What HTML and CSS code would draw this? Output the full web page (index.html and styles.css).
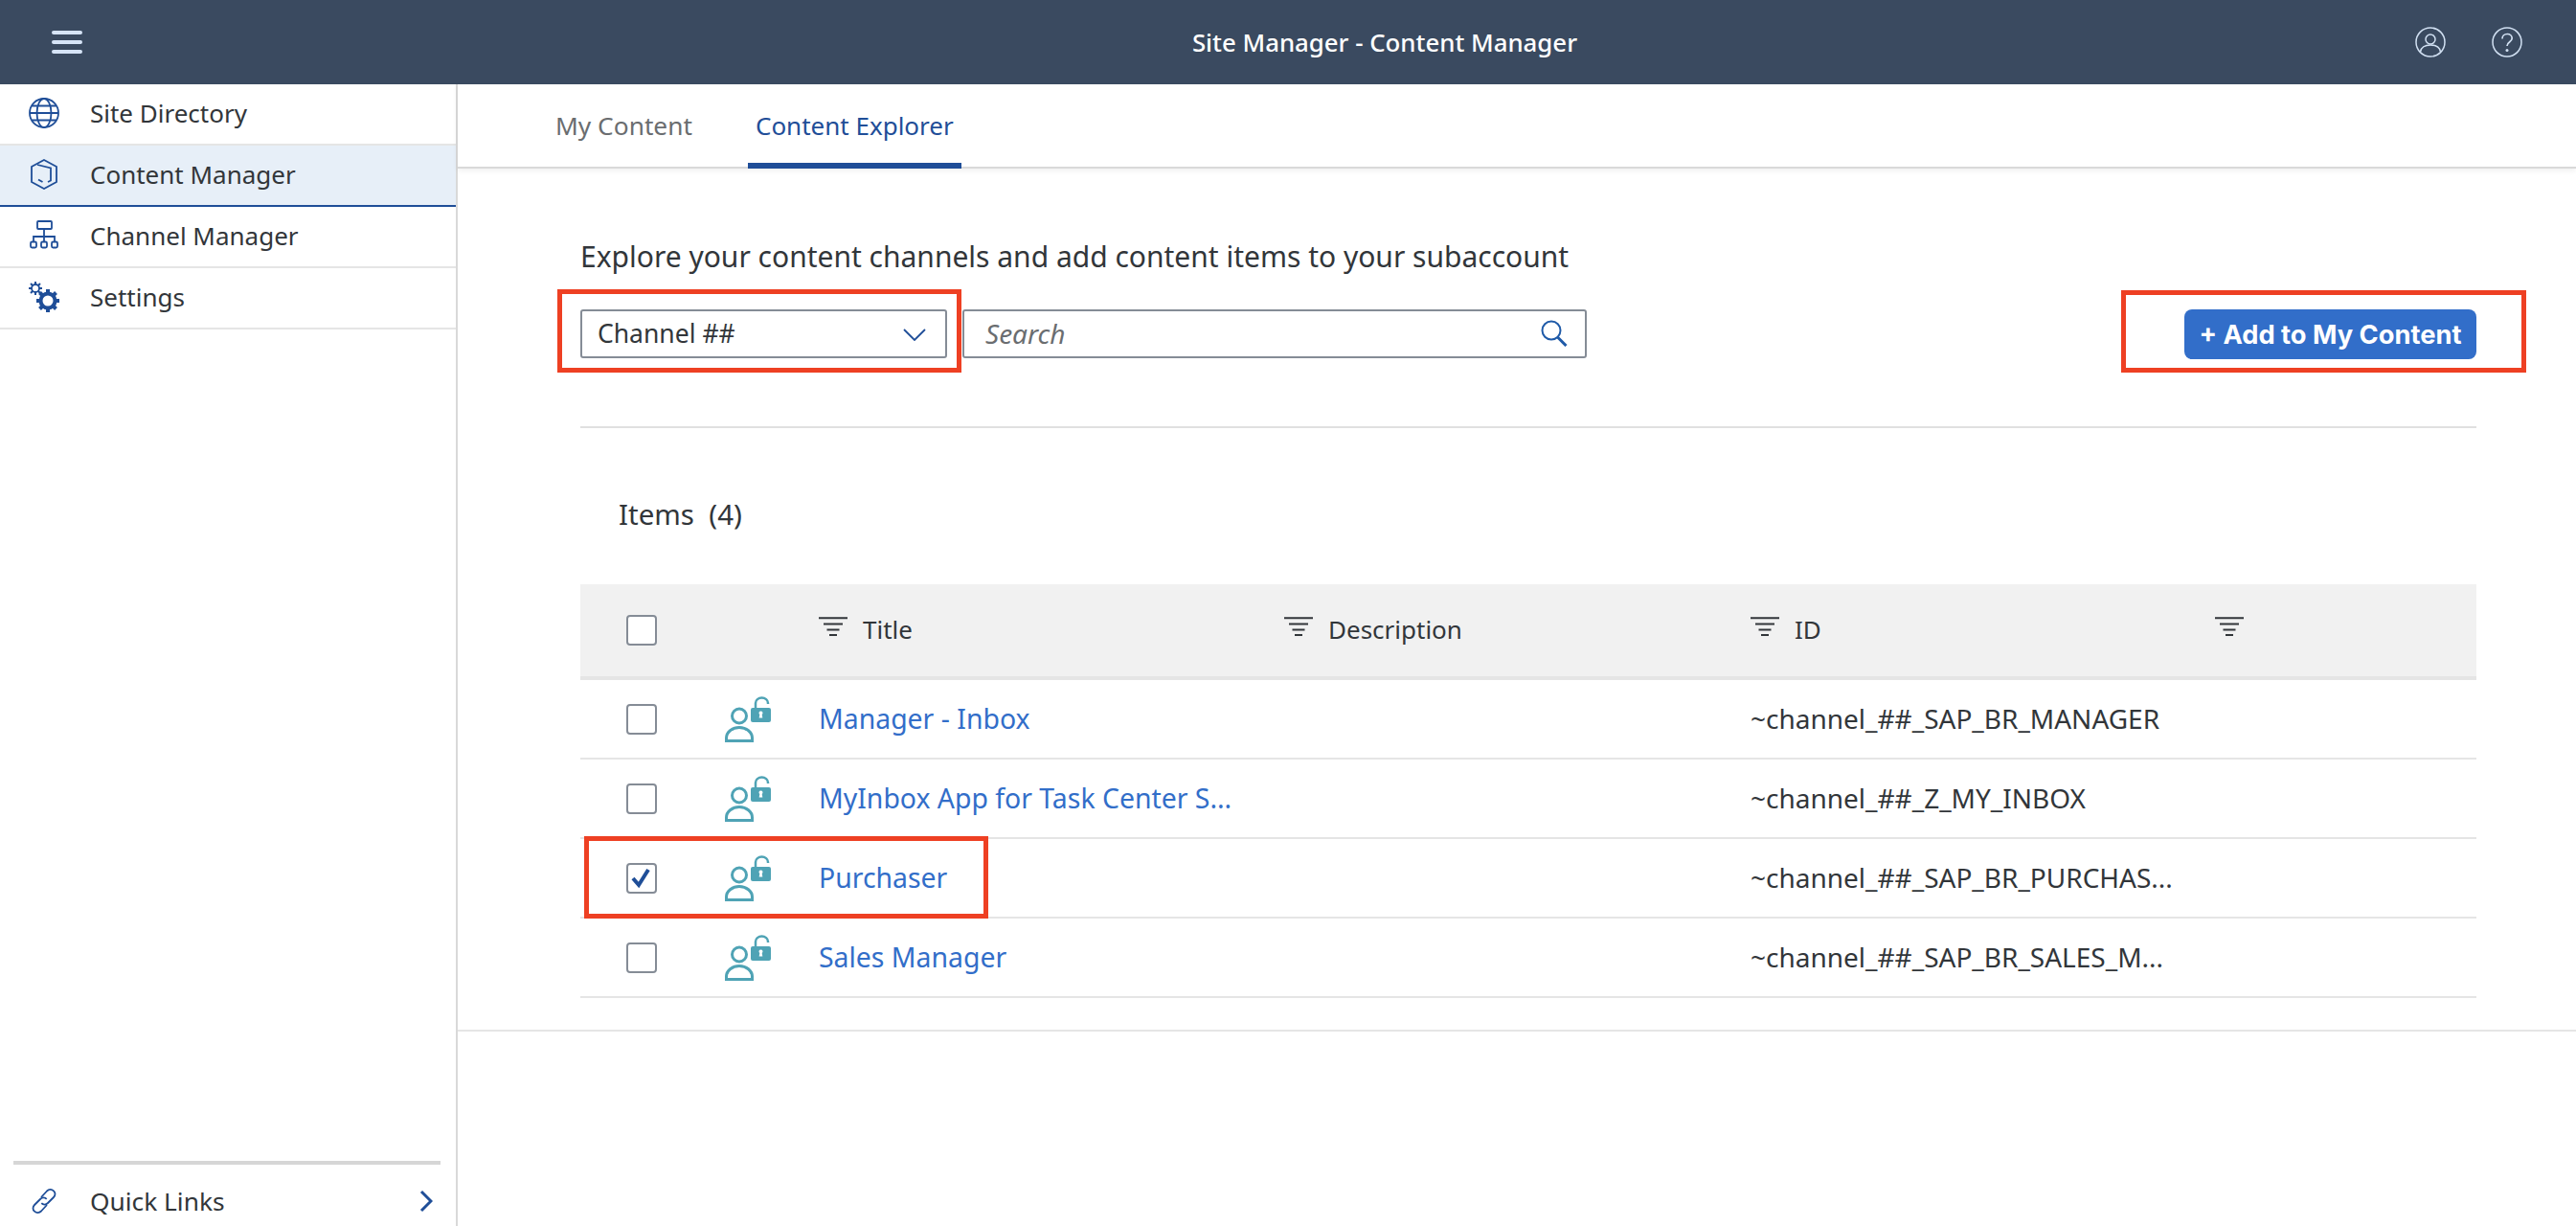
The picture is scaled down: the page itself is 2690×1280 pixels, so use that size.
FILE: index.html
```html
<!DOCTYPE html>
<html lang="en">
<head>
<meta charset="utf-8">
<title>Site Manager - Content Manager</title>
<link rel="stylesheet" href="styles.css">
</head>
<body>
<svg class="defs" aria-hidden="true">
  <symbol id="filter" viewBox="0 0 30 20"><path d="M0 1.200h30M5 7.500h20M8.500 13.500h13M11 19h8" fill="none" stroke="currentColor" stroke-width="2"/></symbol>
  <symbol id="person" viewBox="0 0 48 48">
    <circle cx="15" cy="20.500" r="7.500" fill="none" stroke="#4fa3b5" stroke-width="3"/>
    <path d="M1.500 46.500v-3a13.500 11 0 0 1 27 0v3z" fill="none" stroke="#4fa3b5" stroke-width="3"/>
    <path d="M32 13V7a6.500 5.500 0 0 1 13 0v1" fill="none" stroke="#4fa3b5" stroke-width="2.500"/>
    <rect x="27" y="12" width="21" height="15" rx="2" fill="#4fa3b5"/>
    <path d="M37.500 15.500a2 2 0 0 1 1.200 3.600l.6 3.400h-3.600l.6-3.400a2 2 0 0 1 1.200-3.600z" fill="#fff"/>
  </symbol>
</svg>
<div class="shell">
  <header class="shellbar">
    <button class="menu" aria-label="Menu"><span></span><span></span><span></span></button>
    <h1 class="app-title">Site Manager - Content Manager</h1>
    <div class="shell-actions">
      <svg class="shell-icon" viewBox="0 0 32 32"><circle cx="16" cy="16" r="15" fill="none" stroke="currentColor" stroke-width="1.500"/><circle cx="16" cy="13" r="5" fill="none" stroke="currentColor" stroke-width="1.500"/><path d="M5.500 26c1-5 5-7 10.500-7s9.500 2 10.500 7" fill="none" stroke="currentColor" stroke-width="1.500"/></svg>
      <svg class="shell-icon" viewBox="0 0 32 32"><circle cx="16" cy="16" r="15" fill="none" stroke="currentColor" stroke-width="1.500"/><path d="M11 12.500c0-3 2.300-5 5.200-5s5 1.900 5 4.500c0 3.800-5.200 3.800-5.200 8" fill="none" stroke="currentColor" stroke-width="1.700"/><circle cx="16" cy="24.500" r="1.500" fill="currentColor"/></svg>
    </div>
  </header>
  <div class="body">
    <nav class="sidebar">
      <ul class="nav-list">
        <li class="nav-item">
          <svg class="nav-icon" viewBox="0 0 32 32"><g fill="none" stroke="currentColor" stroke-width="1.800"><circle cx="16" cy="16" r="15"/><ellipse cx="16" cy="16" rx="7.500" ry="15"/><path d="M1 16h30M3.500 8.500h25M3.500 23.500h25"/></g></svg>
          <span>Site Directory</span>
        </li>
        <li class="nav-item selected">
          <svg class="nav-icon" viewBox="0 0 32 32"><g fill="none" stroke="currentColor" stroke-width="1.800"><path d="M16 1l13 7v16l-13 7-13-7V8z"/><path d="M9 6l14 3.500v13l-3 1.500M10 21.500l4.500 2.500"/></g></svg>
          <span>Content Manager</span>
        </li>
        <li class="nav-item">
          <svg class="nav-icon" viewBox="0 0 32 32"><g fill="none" stroke="currentColor" stroke-width="1.800"><rect x="9" y="1" width="15" height="8" rx="1"/><path d="M16 9v8M5 22v-5h22v5M16 17v5"/><rect x="2" y="22.500" width="6" height="6" rx="1.500"/><rect x="13" y="22.500" width="6" height="6" rx="1.500"/><rect x="24" y="22.500" width="6" height="6" rx="1.500"/></g></svg>
          <span>Channel Manager</span>
        </li>
        <li class="nav-item">
          <svg class="nav-icon" viewBox="0 0 32 32"><circle cx="7" cy="7" r="4" fill="none" stroke="currentColor" stroke-width="1.800"/><path d="M7 0v3M7 11v3M0 7h3M11 7h3M2 2l2 2M10 10l2 2M2 12l2-2M10 4l2-2" stroke="currentColor" stroke-width="2"/><circle cx="20" cy="20" r="7.500" fill="none" stroke="currentColor" stroke-width="4"/><path d="M20 8v4M20 28v4M8 20h4M28 20h4M11.500 11.500l3 3M25.500 25.500l3 3M11.500 28.500l3-3M25.500 14.500l3-3" stroke="currentColor" stroke-width="4"/></svg>
          <span>Settings</span>
        </li>
      </ul>
      <div class="quick-links">
        <svg class="nav-icon" viewBox="0 0 32 32"><g fill="none" stroke="currentColor" stroke-width="1.800"><path d="M13 12l6-6.500c2-2 5-2 7-.2s2 4.700 0 6.700l-6 6c-2 2-5 2-6.700.2"/><path d="M19 20l-6 6.500c-2 2-5 2-7 .2s-2-4.700 0-6.700l6-6c2-2 5-2 6.700-.2"/></g></svg>
        <span>Quick Links</span>
        <svg class="quick-chevron" viewBox="0 0 14 24"><path d="M2 2l10 10L2 22" fill="none" stroke="currentColor" stroke-width="3"/></svg>
      </div>
    </nav>
    <main class="main">
      <div class="tabs">
        <div class="tab">My Content</div>
        <div class="tab active">Content Explorer</div>
      </div>
      <section class="panel">
        <p class="intro">Explore your content channels and add content items to your subaccount</p>
        <div class="toolbar">
          <div class="select">
            <span>Channel ##</span>
            <svg class="select-arrow" viewBox="0 0 24 13"><path d="M1 1l11 11L23 1" fill="none" stroke="currentColor" stroke-width="1.800"/></svg>
            <div class="callout callout-select"></div>
          </div>
          <div class="search">
            <span>Search</span>
            <svg class="search-icon" viewBox="0 0 28 28"><g fill="none" stroke="currentColor"><circle cx="11" cy="11" r="9.500" stroke-width="2"/><path d="M17.500 18l9 9" stroke-width="3"/></g></svg>
          </div>
          <button class="add-btn">+ Add to My Content<span class="callout callout-add"></span></button>
        </div>
        <div class="items-title">Items&nbsp; (4)</div>
        <div class="table">
          <div class="row head">
            <span class="check"></span><span></span>
            <div class="cell"><svg class="filter"><use href="#filter"/></svg>Title</div>
            <div class="cell"><svg class="filter"><use href="#filter"/></svg>Description</div>
            <div class="cell"><svg class="filter"><use href="#filter"/></svg>ID</div>
            <div class="cell"><svg class="filter"><use href="#filter"/></svg></div>
          </div>
          <div class="row">
            <span class="check"></span><svg class="person"><use href="#person"/></svg>
            <div class="cell link">Manager - Inbox</div><div class="cell"></div>
            <div class="cell">~channel_##_SAP_BR_MANAGER</div><div class="cell"></div>
          </div>
          <div class="row">
            <span class="check"></span><svg class="person"><use href="#person"/></svg>
            <div class="cell link">MyInbox App for Task Center S...</div><div class="cell"></div>
            <div class="cell">~channel_##_Z_MY_INBOX</div><div class="cell"></div>
          </div>
          <div class="row">
            <span class="check checked"><svg viewBox="0 0 28 28"><path d="M5 14l6 7L21 5" fill="none" stroke="#1f4e98" stroke-width="4"/></svg></span><svg class="person"><use href="#person"/></svg>
            <div class="cell link">Purchaser</div><div class="cell"></div>
            <div class="cell">~channel_##_SAP_BR_PURCHAS...</div><div class="cell"></div>
            <div class="callout callout-row"></div>
          </div>
          <div class="row">
            <span class="check"></span><svg class="person"><use href="#person"/></svg>
            <div class="cell link">Sales Manager</div><div class="cell"></div>
            <div class="cell">~channel_##_SAP_BR_SALES_M...</div><div class="cell"></div>
          </div>
        </div>
      </section>
    </main>
  </div>
</div>
</body>
</html>
```
FILE: styles.css
```css
* { box-sizing: border-box; }
html, body { margin: 0; height: 100%; overflow: hidden; background: #fff; }
body { font-family: "Noto Sans", "Open Sans", sans-serif; font-size: 26px; color: #32363a; }
.defs { display: none; }
.shell { display: flex; flex-direction: column; height: 100vh; }
.shellbar { flex: 0 0 88px; background: #3a4a60; display: flex; align-items: center; justify-content: center; padding-left: 202px; position: relative; }
.menu { position: absolute; left: 54px; top: 32px; width: 32px; height: 24px; padding: 0; border: 0; background: none; display: flex; flex-direction: column; justify-content: space-between; }
.menu span { display: block; height: 4px; border-radius: 2px; background: #d6e4f7; }
.app-title { margin: 0; font-size: 25.800px; font-weight: 500; color: #fff; }
.shell-actions { position: absolute; right: 56px; top: 28px; display: flex; gap: 48px; color: #d1e0f2; }
.shell-icon { width: 32px; height: 32px; display: block; }
.body { flex: 1; display: flex; min-height: 0; }
.sidebar { flex: 0 0 478px; border-right: 2px solid #d9d9d9; display: flex; flex-direction: column; }
.nav-list { list-style: none; margin: 0; padding: 0; flex: 1; }
.nav-item { height: 64px; display: flex; align-items: center; gap: 32px; padding: 0 0 3px 30px; border-bottom: 2px solid #e5e5e5; }
.nav-item.selected { background: #e7eff8; border-bottom-color: #1f4e98; }
.nav-icon { width: 32px; height: 32px; color: #1f4e98; flex: none; }
.quick-links { margin: 0 16px 0 14px; height: 68px; border-top: 4px solid #d6d6d6; display: flex; align-items: center; gap: 32px; padding: 12px 8px 0 16px; font-size: 26.300px; }
.quick-chevron { width: 14px; height: 24px; margin-left: auto; color: #1f4e98; }
.main { flex: 1; min-width: 0; }
.tabs { height: 88px; display: flex; padding-left: 94px; border-bottom: 2px solid #d9d9d9; box-shadow: 0 2px 6px rgba(0,0,0,.07); }
.tab { padding: 0 8px; margin-right: 50px; line-height: 86px; color: #6a6d70; height: 88px; font-size: 26.300px; }
.tab.active { color: #1f4e98; border-bottom: 6px solid #1f4e98; margin-right: 0; font-size: 26px; }
.panel { padding: 0 104px 0 128px; height: 901px; border-bottom: 2px solid #e5e5e5; }
.intro { margin: 0; padding-top: 72px; height: 147px; line-height: 40px; font-size: 30px; }
.toolbar { display: flex; align-items: flex-start; height: 124px; border-bottom: 2px solid #e0e0e0; }
.select { position: relative; width: 383px; height: 51px; border: 2px solid #858c96; border-radius: 3px; display: flex; align-items: center; justify-content: space-between; padding: 0 20px 2px 16px; font-size: 26.500px; }
.select-arrow { width: 24px; height: 13px; color: #1f4e98; margin-top: 4px; }
.search { position: relative; width: 652px; height: 51px; margin-left: 16px; border: 2px solid #858c96; border-radius: 3px; display: flex; align-items: center; justify-content: space-between; padding: 0 18px 2px 22px; font-style: italic; font-size: 28px; color: #6a6d70; }
.search-icon { width: 28px; height: 28px; color: #1f5aa8; }
.add-btn { position: relative; margin-left: auto; width: 305px; height: 52px; border: 0; border-radius: 8px; background: #326ec9; color: #fff; font: 700 27.300px Inter, sans-serif; padding: 0; }
.callout { position: absolute; border: 5px solid #ee4023; pointer-events: none; }
.callout-select { left: -26px; top: -23px; width: 422px; height: 87px; }
.callout-add { left: -66px; top: -20px; width: 423px; height: 86px; }
.callout-row { left: 4px; top: -3px; width: 422px; height: 86px; }
.items-title { height: 163px; padding: 69px 0 0 40px; line-height: 42px; font-size: 29.500px; }
.row { position: relative; height: 83px; display: grid; grid-template-columns: 48px 32px 71px 48px 50px 486px 487px 485px 273px; align-items: center; border-bottom: 2px solid #e5e5e5; font-size: 28px; }
.row > .check { grid-column: 2; }
.row > .person, .row > .check + span { grid-column: 4; }
.row > .cell:nth-of-type(1) { grid-column: 6; }
.row.head { height: 100px; background: #f1f1f1; border-bottom: 4px solid #e5e5e5; font-size: 26px; }
.cell { display: flex; align-items: center; white-space: nowrap; min-width: 0; height: 100%; padding-bottom: 2px; }
.check { display: block; width: 32px; height: 32px; border: 2px solid #858c96; border-radius: 4px; background: #fff; }
.check svg { display: block; width: 28px; height: 28px; }
.person { width: 48px; height: 48px; display: block; margin-top: 0; }
.link { color: #326ec9; font-size: 28.400px; }
.filter { width: 30px; height: 20px; margin-right: 16px; margin-top: -6px; color: #32363a; flex: none; }
```
